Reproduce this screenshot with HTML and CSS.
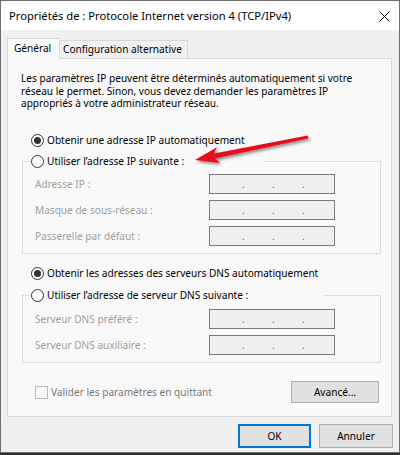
FILE: index.html
```html
<!DOCTYPE html>
<html lang="fr">
<head>
<meta charset="utf-8">
<title>Propriétés de : Protocole Internet version 4 (TCP/IPv4)</title>
<link rel="stylesheet" href="styles.css">
</head>
<body>
<div class="window">
  <div class="titlebar">
    <span class="title">Propriétés de : Protocole Internet version 4 (TCP/IPv4)</span>
    <svg class="close" width="11" height="11" viewBox="0 0 11 11"><path d="M0.5 0.5 L10.5 10.5 M10.5 0.5 L0.5 10.5" stroke="#000" stroke-width="1" fill="none"/></svg>
  </div>
  <div class="content">
    <div class="tabs">
      <div class="tab active">Général</div>
      <div class="tab">Configuration alternative</div>
    </div>
    <div class="panel">
      <p class="intro">Les paramètres IP peuvent être déterminés automatiquement si votre<br>réseau le permet. Sinon, vous devez demander les paramètres IP<br>appropriés à votre administrateur réseau.</p>

      <div class="radio-row first"><span class="radio checked"></span><span>Obtenir une adresse IP automatiquement</span></div>

      <fieldset class="group g1">
        <legend class="legend l1"><div class="radio-row"><span class="radio"></span><span>Utiliser l’adresse IP suivante :</span></div></legend>
        <div class="field first"><span class="label">Adresse IP :</span><span class="ip"><i>.</i><i>.</i><i>.</i></span></div>
        <div class="field"><span class="label">Masque de sous-réseau :</span><span class="ip"><i>.</i><i>.</i><i>.</i></span></div>
        <div class="field"><span class="label">Passerelle par défaut :</span><span class="ip"><i>.</i><i>.</i><i>.</i></span></div>
      </fieldset>

      <div class="radio-row mid"><span class="radio checked"></span><span>Obtenir les adresses des serveurs DNS automatiquement</span></div>

      <fieldset class="group g2">
        <legend class="legend l2"><div class="radio-row"><span class="radio"></span><span>Utiliser l’adresse de serveur DNS suivante :</span></div></legend>
        <div class="field first2"><span class="label">Serveur DNS préféré :</span><span class="ip"><i>.</i><i>.</i><i>.</i></span></div>
        <div class="field"><span class="label">Serveur DNS auxiliaire :</span><span class="ip"><i>.</i><i>.</i><i>.</i></span></div>
      </fieldset>

      <div class="footer">
        <div class="check-row"><span class="check"></span><span class="check-label">Valider les paramètres en quittant</span></div>
        <button class="btn adv" type="button">Avancé...</button>
      </div>
    </div>
    <div class="buttons">
      <button class="btn ok" type="button">OK</button>
      <button class="btn cancel" type="button">Annuler</button>
    </div>
  </div>
  <svg class="arrow" width="135" height="45" viewBox="0 0 135 45">
    <defs>
      <filter id="sh" x="-20%" y="-50%" width="140%" height="200%">
        <feDropShadow dx="1.5" dy="2" stdDeviation="1.4" flood-color="#000" flood-opacity="0.45"/>
      </filter>
    </defs>
    <polygon filter="url(#sh)" fill="#e8111b" points="10,35 35.1,38.04 30.1,33.45 123.3,13.47 122.7,10.53 29.1,28.55 31.9,22.36"/>
  </svg>
</div>
</body>
</html>
```
FILE: styles.css
```css
* { box-sizing: border-box; }
html, body { margin: 0; padding: 0; }
body {
  width: 400px;
  height: 455px;
  overflow: hidden;
  background: #2d2d2d;
  font-family: "Noto Sans", "Open Sans", sans-serif;
  font-size: 10.1px;
  color: #000;
}
.window {
  position: relative;
  width: 400px;
  height: 453px;
  background: #f0f0f0;
  border: 1px solid #6f6f6f;
  display: flex;
  flex-direction: column;
}
.titlebar {
  flex: none;
  height: 29px;
  background: #fff;
  display: flex;
  align-items: center;
  justify-content: space-between;
  padding: 0 9px 0 8px;
}
.title { font-size: 11.2px; line-height: 28px; white-space: nowrap; }
.close { display: block; margin-top: 1px; }
.content { flex: 1; padding: 8px 7px 0 6px; }
.tabs { display: flex; align-items: flex-end; height: 20px; }
.tab {
  height: 18px;
  width: 129px;
  margin-left: -1px;
  padding-left: 3px;
  line-height: 17px;
  border: 1px solid #d9d9d9;
  border-bottom: none;
  background: #f0f0f0;
  white-space: nowrap;
}
.tab.active {
  position: relative;
  z-index: 1;
  height: 21px;
  width: 53px;
  margin-left: 0;
  margin-bottom: -1px;
  padding-left: 6px;
  line-height: 19px;
  background: #f9f9f9;
}
.panel {
  height: 359px;
  border: 1px solid #d9d9d9;
  background: #f9f9f9;
}
.intro {
  margin: 13px 0 0 13px;
  line-height: 12.5px;
  white-space: nowrap;
}
.radio-row {
  display: flex;
  align-items: center;
  gap: 3px;
  height: 20px;
  white-space: nowrap;
}
.radio-row.first { margin: 20.5px 0 0 23px; }
.radio-row.mid { margin: 9px 0 0 23px; }
.radio {
  flex: none;
  width: 13px;
  height: 13px;
  border: 1px solid #333;
  border-radius: 50%;
  background: #fff;
  display: flex;
  align-items: center;
  justify-content: center;
}
.radio.checked::after {
  content: "";
  width: 7px;
  height: 7px;
  border-radius: 50%;
  background: #333;
}
.group {
  margin: 1px 10px 0 14px;
  padding: 0 0 7px 0;
  border: 1px solid #dcdcdc;
  min-width: 0;
}
.group.g2 { margin-top: 2px; }
.legend { padding: 0; margin-left: 8px; height: 20px; }
.legend.l1 { width: 234px; }
.legend.l2 { width: 294px; }
.field {
  display: flex;
  align-items: center;
  height: 20px;
  margin: 6px 0 0 12px;
}
.field.first { margin-top: 3px; }
.field.first2 { margin-top: 4px; }
.label { width: 174px; color: #a0a0a0; white-space: nowrap; }
.ip {
  display: flex;
  width: 126px;
  height: 20px;
  padding-left: 32px;
  border: 1px solid #7a7a7a;
  background: #f0f0f0;
  line-height: 18px;
  color: #6d6d6d;
}
.ip i { font-style: normal; width: 30px; }
.footer {
  display: flex;
  align-items: center;
  justify-content: space-between;
  height: 22px;
  margin: 18px 12px 0 27px;
}
.check-row { display: flex; align-items: center; gap: 3px; }
.check {
  width: 13px;
  height: 13px;
  border: 1px solid #bcbcbc;
  background: #f9f9f9;
}
.check-label { color: #7a7a7a; white-space: nowrap; }
.btn {
  font: inherit;
  color: #000;
  padding: 0;
  margin: 0;
  height: 22px;
  border: 1px solid #adadad;
  background: #e1e1e1;
  text-align: center;
  line-height: 20px;
}
.btn.adv { width: 88px; }
.buttons {
  display: flex;
  justify-content: flex-end;
  gap: 8px;
  margin: 7px -1px 0 0;
}
.btn.ok { width: 73px; height: 24px; border: 2px solid #0078d7; line-height: 20px; }
.btn.cancel { width: 74px; height: 24px; line-height: 22px; }
.arrow { position: absolute; left: 184px; top: 124px; }
```
